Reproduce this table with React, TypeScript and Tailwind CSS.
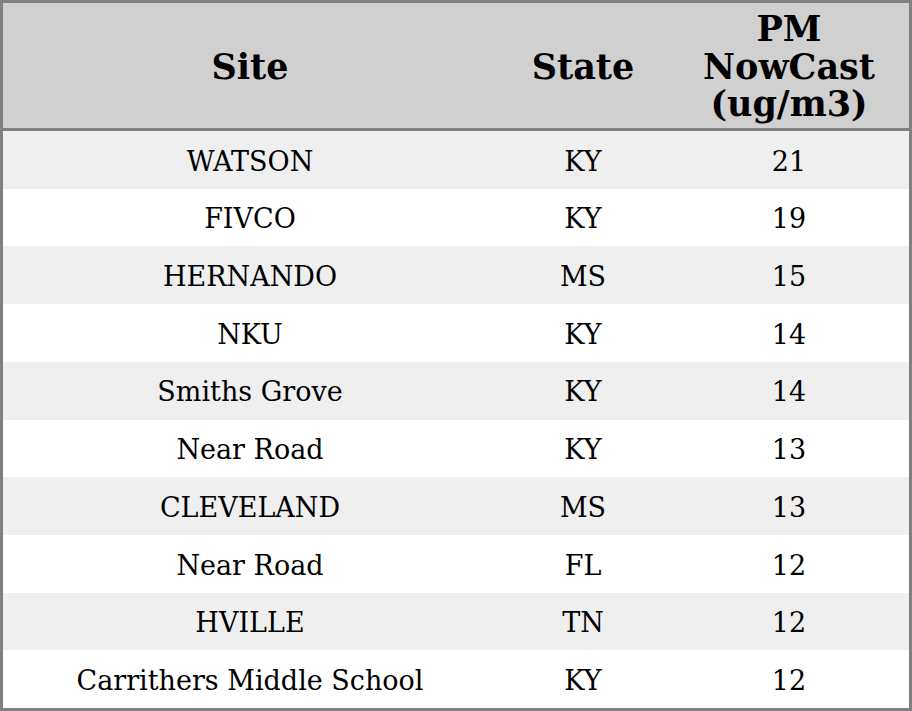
const rows = [
  { site: "WATSON", state: "KY", pm: 21 },
  { site: "FIVCO", state: "KY", pm: 19 },
  { site: "HERNANDO", state: "MS", pm: 15 },
  { site: "NKU", state: "KY", pm: 14 },
  { site: "Smiths Grove", state: "KY", pm: 14 },
  { site: "Near Road", state: "KY", pm: 13 },
  { site: "CLEVELAND", state: "MS", pm: 13 },
  { site: "Near Road", state: "FL", pm: 12 },
  { site: "HVILLE", state: "TN", pm: 12 },
  { site: "Carrithers Middle School", state: "KY", pm: 12 },
];

export default function App() {
  return (
    <div className="w-[912px] h-[711px] border-[3px] border-[#808080] flex flex-col text-black font-['DejaVu_Serif',serif]">
      {/* Header */}
      <div className="grid grid-cols-[494px_172px_240px] h-[128px] shrink-0 pt-[2px] bg-[#d0d0d0] border-b-[3px] border-[#808080] text-[35px] font-bold leading-[37.5px] text-center">
        <div className="flex items-center justify-center">Site</div>
        <div className="flex items-center justify-center">State</div>
        <div className="flex items-center justify-center">
          PM
          <br />
          NowCast
          <br />
          (ug/m3)
        </div>
      </div>

      {/* Body */}
      <div className="flex-1 flex flex-col text-[27px]">
        {rows.map((r, i) => (
          <div
            key={i}
            className={`flex-1 grid grid-cols-[494px_172px_240px] items-center pt-1 text-center ${
              i % 2 === 0 ? "bg-[#efefef]" : "bg-white"
            }`}
          >
            <div>{r.site}</div>
            <div>{r.state}</div>
            <div>{r.pm}</div>
          </div>
        ))}
      </div>
    </div>
  );
}
